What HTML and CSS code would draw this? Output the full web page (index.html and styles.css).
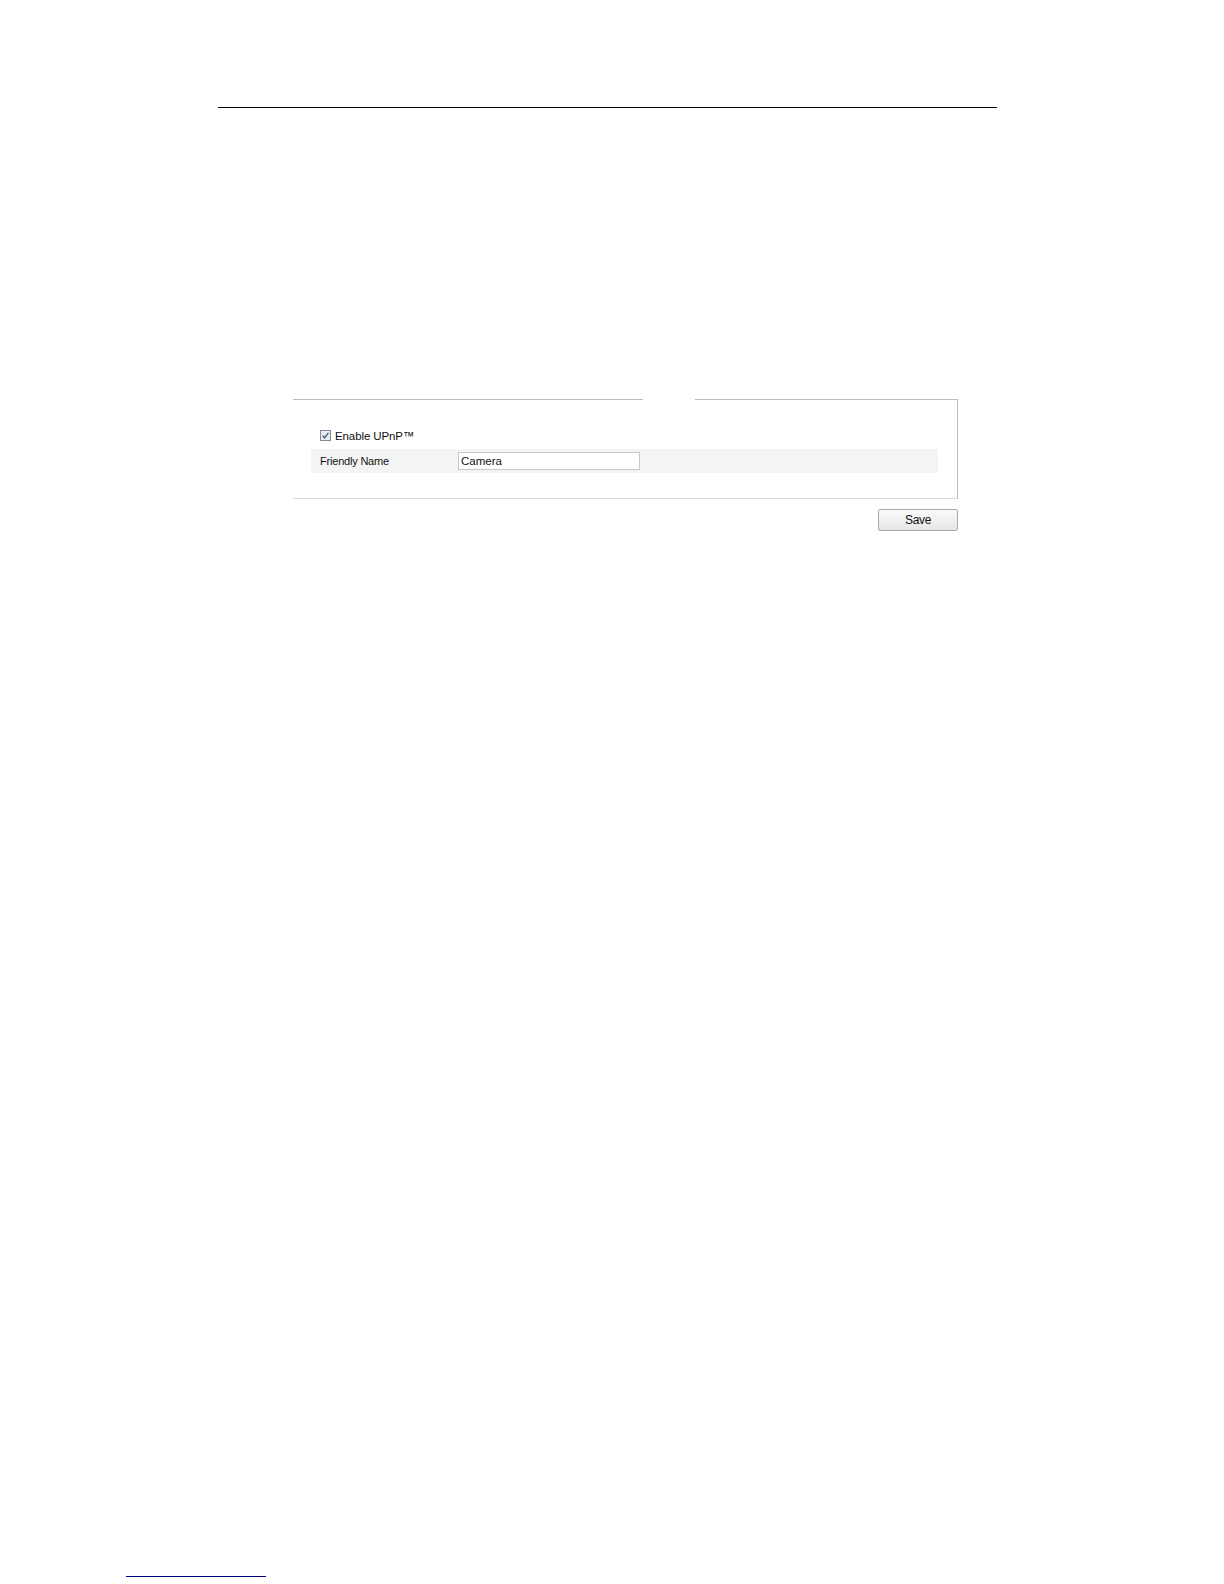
FILE: index.html
```html
<!DOCTYPE html>
<html>
<head>
<meta charset="utf-8">
<link rel="stylesheet" href="styles.css">
</head>
<body>
<div class="page">
  <div class="header-rule"></div>
  <div class="panel-wrap">
    <div class="panel">
      <div class="panel-top">
        <span class="seg seg-left"></span>
        <span class="seg-gap"></span>
        <span class="seg seg-right"></span>
      </div>
      <div class="panel-body">
        <label class="check-row">
          <span class="checkbox">
            <svg width="11" height="11" viewBox="0 0 11 11">
              <rect x="0.5" y="0.5" width="10" height="10" fill="#e8ecf2" stroke="#7f8a99"/>
              <path d="M2.6 5.6 L4.6 7.8 L8.4 2.8" fill="none" stroke="#4a5a78" stroke-width="1.4"/>
            </svg>
          </span>
          <span class="check-label">Enable UPnP™</span>
        </label>
        <div class="field-row">
          <span class="field-label">Friendly Name</span>
          <span class="field-input">Camera</span>
        </div>
      </div>
    </div>
    <div class="actions">
      <button class="btn">Save</button>
    </div>
  </div>
  <div class="footer">
    <span class="footer-link"></span>
  </div>
</div>
</body>
</html>
```
FILE: styles.css
```css
html, body {
  margin: 0;
  padding: 0;
  background: #ffffff;
}
.page {
  width: 1224px;
  height: 1584px;
  position: relative;
  font-family: "Liberation Sans", Arial, sans-serif;
  font-size: 11px;
  color: #222;
  display: flex;
  flex-direction: column;
}
.header-rule {
  margin-top: 107px;
  margin-left: 218px;
  width: 779px;
  height: 1px;
  background: #000;
}
.panel-wrap {
  margin-top: 291px;
  margin-left: 293px;
  width: 665px;
  display: flex;
  flex-direction: column;
}
.panel {
  border-right: 1px solid #bdbdbd;
  border-bottom: 1px solid #d9d9d9;
  height: 99px;
  display: flex;
  flex-direction: column;
}
.panel-top {
  display: flex;
  height: 1px;
}
.seg {
  height: 1px;
  background: #bdbdbd;
}
.seg-left { width: 350px; }
.seg-gap { width: 52px; }
.seg-right { flex: 1; }
.panel-body {
  padding-left: 18px;
  padding-top: 29px;
  display: flex;
  flex-direction: column;
}
.check-row {
  display: flex;
  align-items: center;
  height: 13px;
  padding-left: 9px;
}
.checkbox {
  width: 11px;
  height: 11px;
  display: flex;
}
.check-label {
  margin-left: 4px;
  font-size: 11.5px;
  color: #111;
  letter-spacing: -0.1px;
}
.field-row {
  margin-top: 7px;
  width: 627px;
  height: 24px;
  background: #f4f4f4;
  display: flex;
  align-items: center;
}
.field-label {
  width: 138px;
  padding-left: 9px;
  color: #111;
  letter-spacing: -0.2px;
}
.field-input {
  width: 178px;
  height: 16px;
  border: 1px solid #c8c8c8;
  background: #fff;
  padding-left: 2px;
  line-height: 16px;
  font-size: 11.5px;
  color: #111;
}
.actions {
  display: flex;
  justify-content: flex-end;
  margin-top: 10px;
}
.btn {
  width: 80px;
  height: 22px;
  border: 1px solid #a9a9a9;
  border-radius: 2px;
  background: linear-gradient(#fafafa, #e6e6e6);
  font-family: "Liberation Sans", Arial, sans-serif;
  font-size: 12px;
  color: #111;
  padding: 0;
  letter-spacing: -0.3px;
}
.footer {
  position: absolute;
  left: 126px;
  top: 1576px;
}
.footer-link {
  display: block;
  width: 140px;
  height: 1px;
  background: #000080;
}
```
